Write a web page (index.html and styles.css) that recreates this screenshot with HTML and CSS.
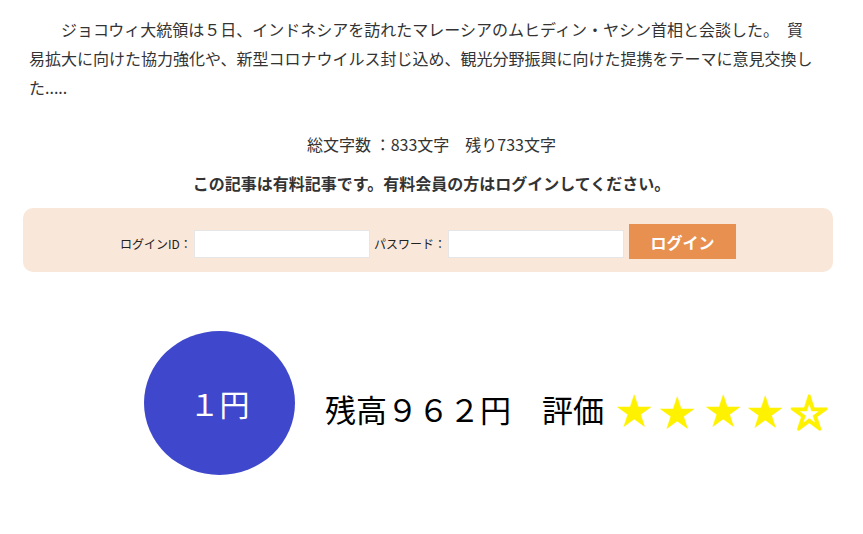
FILE: index.html
```html
<!DOCTYPE html>
<html lang="ja">
<head>
<meta charset="utf-8">
<link rel="stylesheet" href="styles.css">
</head>
<body>
<div class="page">
  <p class="lead">ジョコウィ大統領は５日、インドネシアを訪れたマレーシアのムヒディン・ヤシン首相と会談した。　貿<br>易拡大に向けた協力強化や、新型コロナウイルス封じ込め、観光分野振興に向けた提携をテーマに意見交換し<br>た.....</p>
  <p class="count">総文字数 ：833文字　残り733文字</p>
  <p class="notice">この記事は有料記事です。有料会員の方はログインしてください。</p>
  <form class="login">
    <label class="lbl">ログインID：</label>
    <input class="field" type="text">
    <label class="lbl">パスワード：</label>
    <input class="field" type="password">
    <button class="btn" type="button">ログイン</button>
  </form>
  <div class="wallet">
    <div class="coin">１円</div>
    <div class="balance">残高９６２円　評価</div>
    <div class="stars"><span class="star s1">★</span><span class="star s2">★</span><span class="star s3">★</span><span class="star s4">★</span><span class="star s5">☆</span></div>
  </div>
</div>
</body>
</html>
```

FILE: styles.css
```css
* { box-sizing: border-box; }
html, body { margin: 0; padding: 0; background: #fff; }
body {
  font-family: "Noto Sans CJK JP", "Noto Sans", sans-serif;
  color: #333;
  width: 863px;
  height: 534px;
  overflow: hidden;
}
.page { padding: 15px 0 0 0; }
.lead {
  margin: 0 0 0 29px;
  width: 820px;
  font-size: 16px;
  line-height: 29px;
  text-indent: 2em;
  white-space: nowrap;
}
.count {
  margin: 31px 0 0 0;
  text-align: center;
  font-size: 16px;
  line-height: 22px;
  color: #333;
}
.notice {
  margin: 17px 0 0 0;
  text-align: center;
  font-size: 16px;
  font-weight: bold;
  line-height: 22px;
  color: #333;
}
.login {
  margin: 14px 0 0 23px;
  width: 810px;
  height: 64px;
  background: #f9e7da;
  border-radius: 10px;
  display: flex;
  align-items: center;
  justify-content: center;
  padding: 6px 0 0 0;
}
.lbl { font-size: 12px; color: #222; margin-right: 2px; }
.field {
  width: 176px;
  height: 28px;
  border: 1px solid #e6e6e6;
  background: #fff;
  margin: 2px 4px 0 0;
  padding: 0;
}
.btn {
  margin-left: 1px;
  width: 107px;
  height: 35px;
  border: none;
  background: #e8904f;
  color: #fff;
  font-family: inherit;
  font-size: 16px;
  font-weight: bold;
  margin-top: -3px;
}
.wallet {
  display: flex;
  align-items: center;
  margin-top: 59px;
  padding-left: 144px;
}
.coin {
  width: 151px;
  height: 144px;
  border-radius: 50%;
  background: #3f48cc;
  color: #fff;
  font-size: 30px;
  display: flex;
  align-items: center;
  justify-content: center;
  flex: none;
}
.balance {
  margin-left: 30px;
  margin-top: 10px;
  font-size: 31px;
  color: #000;
  white-space: nowrap;
}
.stars {
  margin-top: 12px;
  font-size: 37px;
  line-height: 1;
  color: #fff200;
  white-space: nowrap;
  display: flex;
}
.star { display: block; width: 37px; text-align: center; }
.s1 { margin-left: 12px; }
.s2 { margin-left: 6px; position: relative; top: 2px; }
.s3 { margin-left: 9px; }
.s4 { margin-left: 5px; position: relative; top: 1px; }
.s5 { margin-left: 7px; position: relative; top: 2px; -webkit-text-stroke: 2.5px #fff200; }
```
